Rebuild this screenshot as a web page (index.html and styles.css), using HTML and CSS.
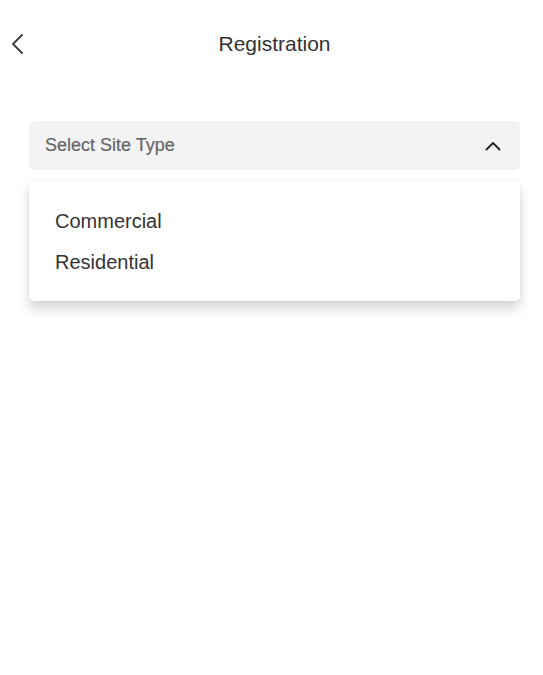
FILE: index.html
```html
<!DOCTYPE html>
<html>
<head>
<meta charset="utf-8">
<link rel="stylesheet" href="styles.css">
</head>
<body>
<header class="topbar">
  <button class="back" aria-label="Back">
    <svg width="14" height="22" viewBox="0 0 14 22"><path d="M12 2 L3 11 L12 20" fill="none" stroke="#444" stroke-width="2" stroke-linecap="round" stroke-linejoin="round"/></svg>
  </button>
  <h1 class="title">Registration</h1>
  <span></span>
</header>
<main class="content">
  <div class="select">
    <span class="placeholder">Select Site Type</span>
    <svg class="chev" width="16" height="10" viewBox="0 0 16 10"><path d="M1.5 8.5 L8 2 L14.5 8.5" fill="none" stroke="#222" stroke-width="1.8" stroke-linecap="round" stroke-linejoin="round"/></svg>
  </div>
  <ul class="menu">
    <li>Commercial</li>
    <li>Residential</li>
  </ul>
</main>
</body>
</html>
```
FILE: styles.css
```css
html, body {
  margin: 0;
  padding: 0;
  background: #fff;
  font-family: "Liberation Sans", Arial, sans-serif;
}
body {
  min-height: 100vh;
}
.topbar {
  height: 88px;
  display: grid;
  grid-template-columns: 40px 1fr 40px;
  align-items: center;
  padding: 0 0 0 6px;
}
.back {
  background: none;
  border: 0;
  padding: 0 0 0 4px;
  display: flex;
  align-items: center;
  height: 24px;
}
.title {
  margin: 0;
  text-align: center;
  font-weight: normal;
  font-size: 21px;
  color: #333;
}
.content {
  padding: 33px 23px 60px 29px;
}
.select {
  height: 49px;
  background: #f3f3f3;
  border-radius: 5px;
  display: flex;
  align-items: center;
  justify-content: space-between;
  padding: 0 19px 0 16px;
  box-sizing: border-box;
}
.placeholder {
  font-size: 18px;
  color: #666;
  -webkit-text-stroke: 0.2px #666;
}
.menu {
  list-style: none;
  margin: 11px 0 0;
  padding: 20px 0 18px 26px;
  background: #fff;
  border-radius: 5px;
  box-shadow: 0 8px 12px rgba(0,0,0,0.16), 0 0 5px rgba(0,0,0,0.05);
}
.menu li {
  font-size: 20px;
  line-height: 41px;
  color: #333;
}
```
